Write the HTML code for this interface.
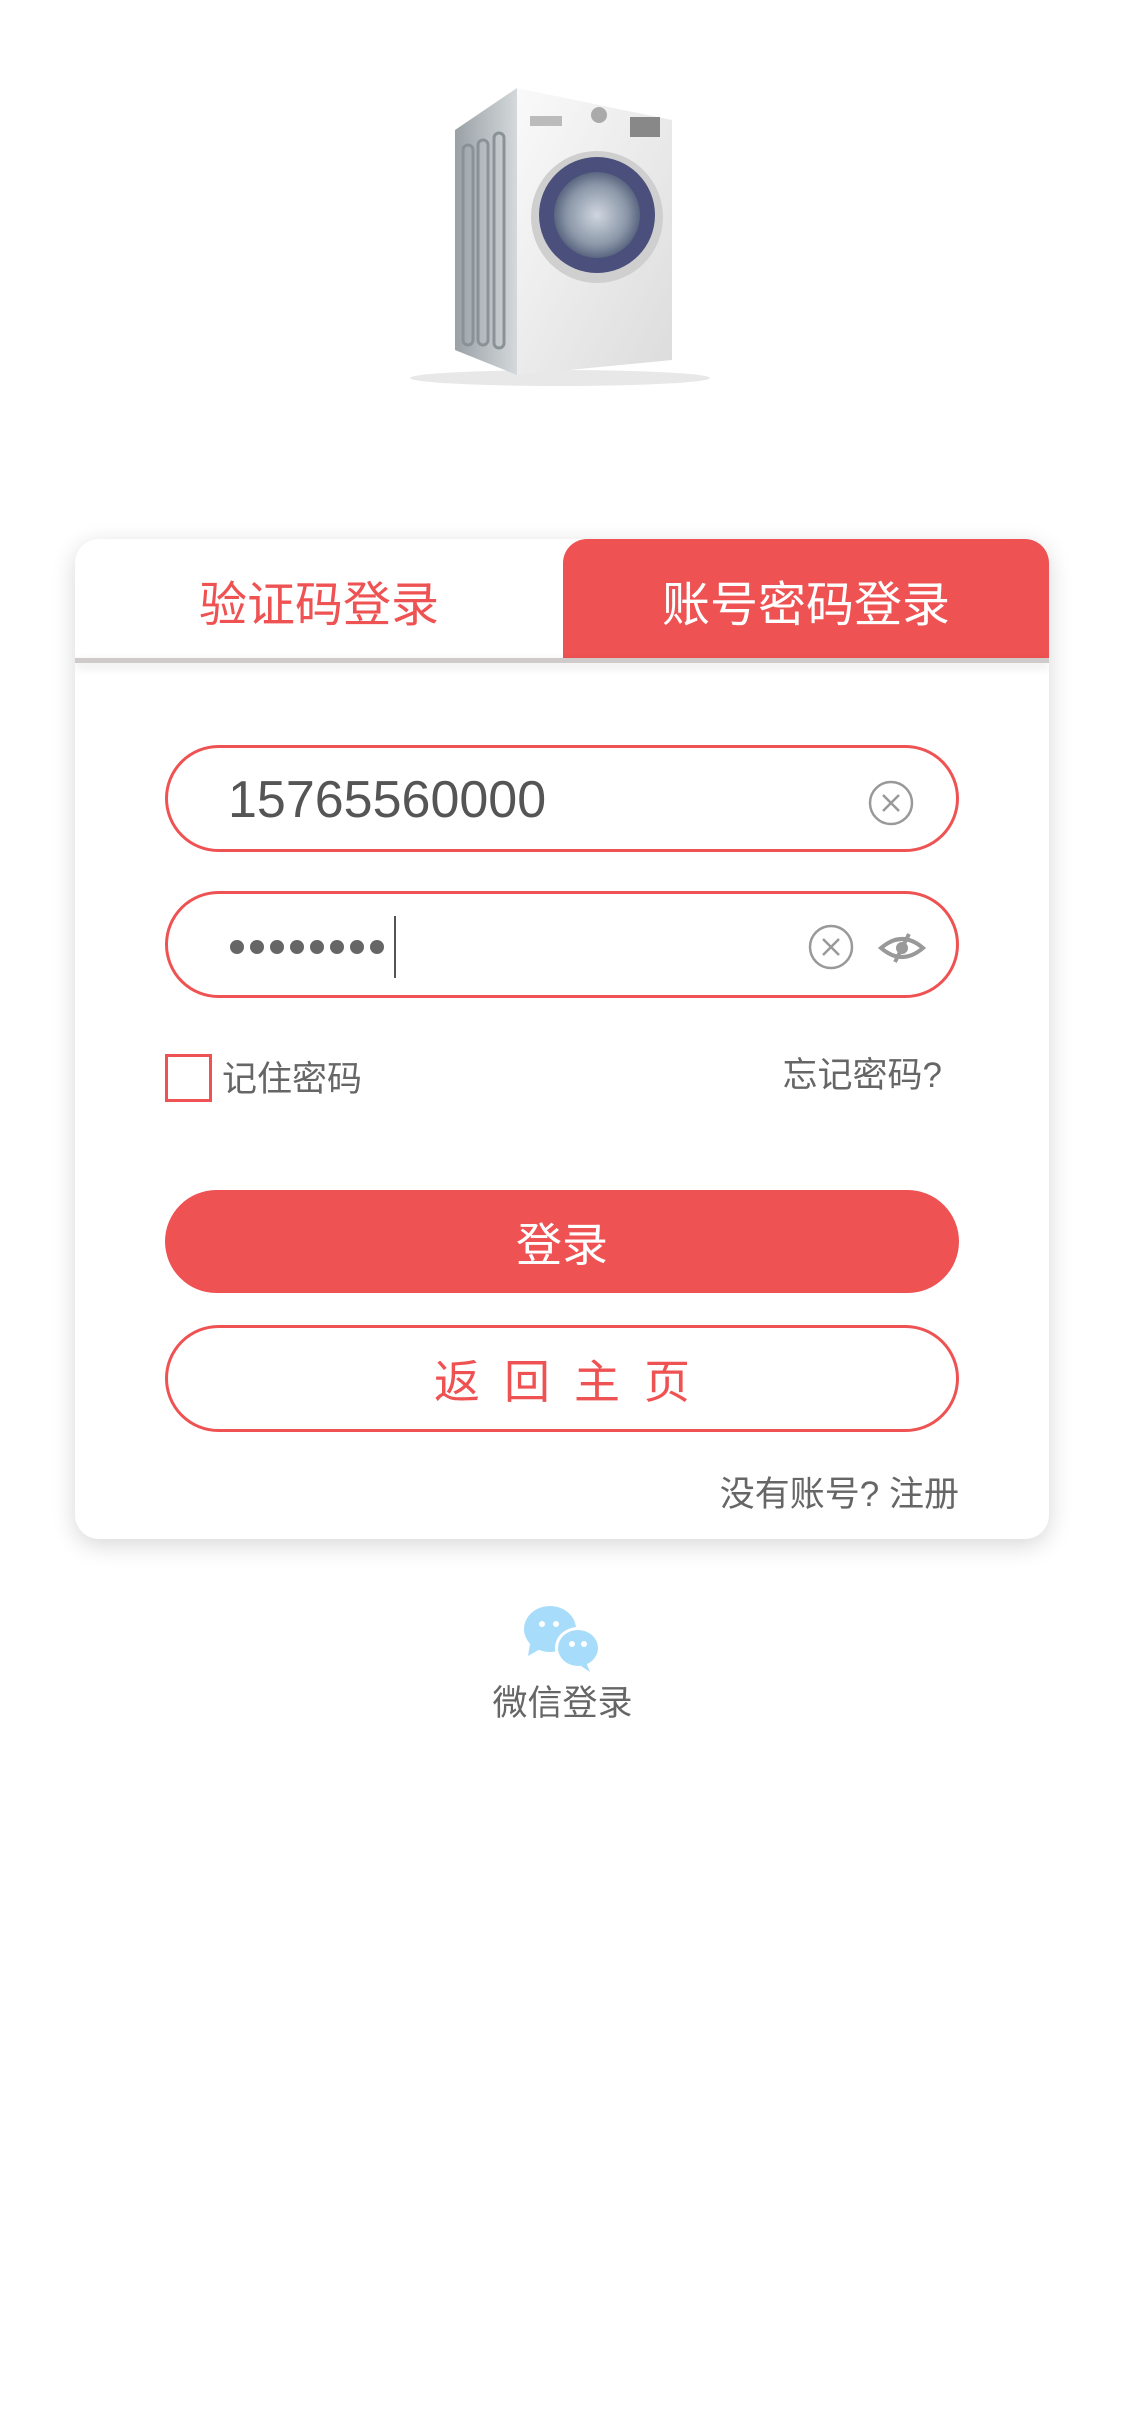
<!DOCTYPE html>
<html><head><meta charset="utf-8"><style>
*{margin:0;padding:0;box-sizing:border-box}
body{width:1125px;height:2436px;background:#fff;position:relative;overflow:hidden;font-family:"Liberation Sans","Noto Sans CJK SC",sans-serif}
.a{position:absolute}
.card{left:75px;top:539px;width:974px;height:1000px;border-radius:24px;background:#fff;box-shadow:0 6px 24px rgba(0,0,0,.16);overflow:hidden}
.tab{top:0;height:121px;display:flex;align-items:center;justify-content:center;font-size:48px}
.inp{left:90px;width:794px;height:107px;border:3px solid #ef5252;border-radius:54px}
.txt{color:#666;font-size:35px}
.d{position:absolute;top:46px;width:14px;height:14px;border-radius:50%;background:#666}
</style></head><body>
<svg class="a" style="left:0;top:0" width="1125" height="420">
 <defs><linearGradient id="s" x1="0" x2="1"><stop offset="0" stop-color="#9aa1a6"/><stop offset="1" stop-color="#d4d8db"/></linearGradient>
 <linearGradient id="f" x1="0" x2="1" y1="0" y2="1"><stop offset="0" stop-color="#fafafa"/><stop offset="1" stop-color="#dcdcdc"/></linearGradient>
 <radialGradient id="g"><stop offset="0" stop-color="#cfd6df"/><stop offset=".7" stop-color="#8b97a8"/><stop offset="1" stop-color="#5a6680"/></radialGradient></defs>
 <ellipse cx="560" cy="378" rx="150" ry="8" fill="#e8e8e8"/>
 <polygon points="455,130 517,88 517,375 455,350" fill="url(#s)"/>
 <rect x="463" y="145" width="10" height="200" rx="5" fill="none" stroke="#8b9297" stroke-width="3"/>
 <rect x="478" y="140" width="10" height="205" rx="5" fill="none" stroke="#8b9297" stroke-width="3"/>
 <rect x="494" y="133" width="10" height="215" rx="5" fill="none" stroke="#8b9297" stroke-width="3"/>
 <polygon points="517,88 672,120 672,360 517,375" fill="url(#f)"/>
 <rect x="530" y="116" width="32" height="10" fill="#bbb"/>
 <circle cx="599" cy="115" r="8" fill="#aaa"/>
 <rect x="630" y="117" width="30" height="20" fill="#888"/>
 <circle cx="597" cy="217" r="66" fill="#cfcfcf"/>
 <circle cx="597" cy="215" r="58" fill="#4a4f7c"/>
 <circle cx="597" cy="215" r="43" fill="url(#g)"/>
</svg>
<div class="a card">
 <div class="a tab" style="left:0;width:488px;color:#ef5252">验证码登录</div>
 <div class="a tab" style="left:488px;width:486px;background:#ef5252;color:#fff;border-top-left-radius:24px">账号密码登录</div>
 <div class="a" style="left:0;top:119px;width:974px;height:5px;background:#cfcbcb;box-shadow:0 4px 10px rgba(0,0,0,.12)"></div>
 <div class="a inp" style="top:206px"><span class="a" style="left:60px;top:22px;font-size:52px;color:#555">15765560000</span>
  <svg class="a" style="left:700px;top:32px" width="46" height="46"><circle cx="23" cy="23" r="21" fill="none" stroke="#999" stroke-width="2.5"/><path d="M15 15L31 31M31 15L15 31" stroke="#999" stroke-width="2.5"/></svg></div>
 <div class="a inp" style="top:352px">
  <div class="d" style="left:62px"></div><div class="d" style="left:82px"></div><div class="d" style="left:102px"></div><div class="d" style="left:122px"></div><div class="d" style="left:142px"></div><div class="d" style="left:162px"></div><div class="d" style="left:182px"></div><div class="d" style="left:202px"></div>
  <div class="a" style="left:226px;top:22px;width:2px;height:62px;background:#555"></div>
  <svg class="a" style="left:640px;top:30px" width="46" height="46"><circle cx="23" cy="23" r="21" fill="none" stroke="#999" stroke-width="2.5"/><path d="M15 15L31 31M31 15L15 31" stroke="#999" stroke-width="2.5"/></svg>
  <svg class="a" style="left:710px;top:38px" width="48" height="32"><path d="M3 16Q24 -2 45 16Q24 34 3 16Z" fill="none" stroke="#999" stroke-width="4"/><circle cx="24" cy="16" r="6" fill="#999"/><path d="M31 2L17 30" stroke="#999" stroke-width="4"/></svg></div>
 <div class="a" style="left:90px;top:515px;width:47px;height:48px;border:3px solid #ef5252"></div>
 <div class="a txt" style="left:147px;top:512px">记住密码</div>
 <div class="a txt" style="right:107px;top:508px">忘记密码?</div>
 <div class="a" style="left:90px;top:651px;width:794px;height:103px;background:#ef5252;border-radius:52px;color:#fff;font-size:46px;display:flex;align-items:center;justify-content:center">登录</div>
 <div class="a inp" style="top:786px;color:#ef5252;font-size:46px;display:flex;align-items:center;justify-content:center;letter-spacing:24px;padding-left:24px">返回主页</div>
 <div class="a txt" style="right:90px;top:927px">没有账号? 注册</div>
</div>
<svg class="a" style="left:520px;top:1604px" width="84" height="68">
 <ellipse cx="30" cy="25" rx="26" ry="23" fill="#a8dcfb"/><path d="M10 40L8 52L22 44Z" fill="#a8dcfb"/>
 <ellipse cx="58" cy="44" rx="23" ry="21" fill="#fff"/><ellipse cx="58" cy="44" rx="20" ry="18" fill="#a8dcfb"/><path d="M66 58L70 68L58 60Z" fill="#a8dcfb"/>
 <circle cx="22" cy="20" r="3" fill="#fff"/><circle cx="36" cy="20" r="3" fill="#fff"/><circle cx="52" cy="40" r="3" fill="#fff"/><circle cx="64" cy="40" r="3" fill="#fff"/>
</svg>
<div class="a txt" style="left:0;width:1125px;text-align:center;top:1675px">微信登录</div>
</body></html>
